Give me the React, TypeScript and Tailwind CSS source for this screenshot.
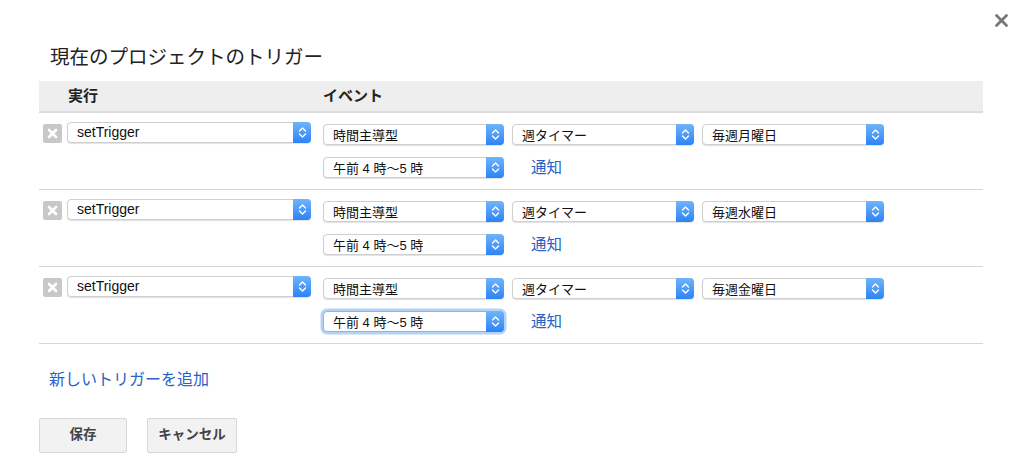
import React from 'react'

type Trigger = { fn: string; source: string; timer: string; day: string; hour: string; focused?: boolean }

const triggers: Trigger[] = [
  { fn: 'setTrigger', source: '時間主導型', timer: '週タイマー', day: '毎週月曜日', hour: '午前 4 時〜5 時' },
  { fn: 'setTrigger', source: '時間主導型', timer: '週タイマー', day: '毎週水曜日', hour: '午前 4 時〜5 時' },
  { fn: 'setTrigger', source: '時間主導型', timer: '週タイマー', day: '毎週金曜日', hour: '午前 4 時〜5 時', focused: true },
]

const Chevrons: React.FC = () => (
  <svg width="9" height="13" viewBox="0 0 9 13" fill="none" stroke="white" strokeWidth="1.4" strokeLinecap="round" strokeLinejoin="round">
    <path d="M1.5 5 L4.5 2 L7.5 5" />
    <path d="M1.5 8 L4.5 11 L7.5 8" />
  </svg>
)

const Select: React.FC<{ text: string; width: string; latin?: boolean; focused?: boolean }> = ({ text, width, latin, focused }) => (
  <div
    className={`flex h-[21px] items-stretch rounded-[4px] bg-white shadow-[0_1px_1px_rgba(0,0,0,0.12)] ${width} ${
      focused ? 'border border-[#86b6f2] ring-[2.5px] ring-[#b4d2f8]' : 'border border-[#cfcfcf]'
    }`}
  >
    <div className={`flex-1 pl-[9px] leading-[19px] text-[#111] ${latin ? 'text-[14px]' : 'text-[13px] pt-[1px]'}`}>{text}</div>
    <div className="-my-px -mr-px flex w-[18px] items-center justify-center rounded-r-[4px] bg-gradient-to-b from-[#6fb4fb] to-[#2b83f6]">
      <Chevrons />
    </div>
  </div>
)

const DeleteBox: React.FC = () => (
  <div className="flex h-[19px] w-[19px] items-center justify-center rounded-[2px] bg-[#c8c8c8]">
    <svg width="11" height="11" viewBox="0 0 11 11" stroke="white" strokeWidth="2.6" strokeLinecap="round">
      <path d="M2 2 L9 9" />
      <path d="M9 2 L2 9" />
    </svg>
  </div>
)

const App: React.FC = () => {
  return (
    <div className="relative h-[467px] w-[1024px] overflow-hidden bg-white font-['Liberation_Sans','Noto_Sans_CJK_JP',sans-serif] text-[#222]">
      {/* Close */}
      <button className="absolute left-[994px] top-[13px] h-[15px] w-[15px]">
        <svg width="15" height="15" viewBox="0 0 15 15" stroke="#777" strokeWidth="2.8" strokeLinecap="round">
          <path d="M2.5 2.5 L12.5 12.5" />
          <path d="M12.5 2.5 L2.5 12.5" />
        </svg>
      </button>

      {/* Title */}
      <h1 className="pl-[50px] pt-[44px] text-[19.5px] leading-[26px] font-normal">現在のプロジェクトのトリガー</h1>

      {/* Table */}
      <div className="ml-[39px] mt-[11px] w-[944px]">
        <div className="flex h-[32px] items-center border-b-2 border-[#dcdcdc] bg-[#eeeeee] text-[15px] font-bold">
          <div className="w-[284px] pl-[29px]">実行</div>
          <div>イベント</div>
        </div>

        {triggers.map((t, i) => (
          <div key={i} className="flex h-[77px] border-b border-[#d6d6d6]">
            <div className="flex w-[284px] items-start gap-[5px] pl-[4px] pt-[9px]">
              <div className="pt-[2px]">
                <DeleteBox />
              </div>
              <Select text={t.fn} width="w-[244px]" latin />
            </div>
            <div className="flex flex-col gap-[12px] pt-[11px]">
              <div className="flex gap-[8px]">
                <Select text={t.source} width="w-[181px]" />
                <Select text={t.timer} width="w-[182px]" />
                <Select text={t.day} width="w-[182px]" />
              </div>
              <div className="flex items-center gap-[27px]">
                <Select text={t.hour} width="w-[181px]" focused={t.focused} />
                <a className="text-[15.5px] leading-[20px] text-[#2a62c4]">通知</a>
              </div>
            </div>
          </div>
        ))}
      </div>

      {/* Add */}
      <div className="ml-[49px] mt-[25px] text-[16px] leading-[22px] text-[#2a62c4]">新しいトリガーを追加</div>

      {/* Buttons */}
      <div className="ml-[39px] mt-[27px] flex gap-[20px]">
        <button className="h-[35px] w-[88px] rounded-[2px] border border-[#d8d8d8] bg-[#f2f2f2] text-[13.5px] font-bold text-[#444]">保存</button>
        <button className="h-[35px] w-[90px] rounded-[2px] border border-[#d8d8d8] bg-[#f2f2f2] text-[13.5px] font-bold text-[#444]">キャンセル</button>
      </div>
    </div>
  )
}

export default App
